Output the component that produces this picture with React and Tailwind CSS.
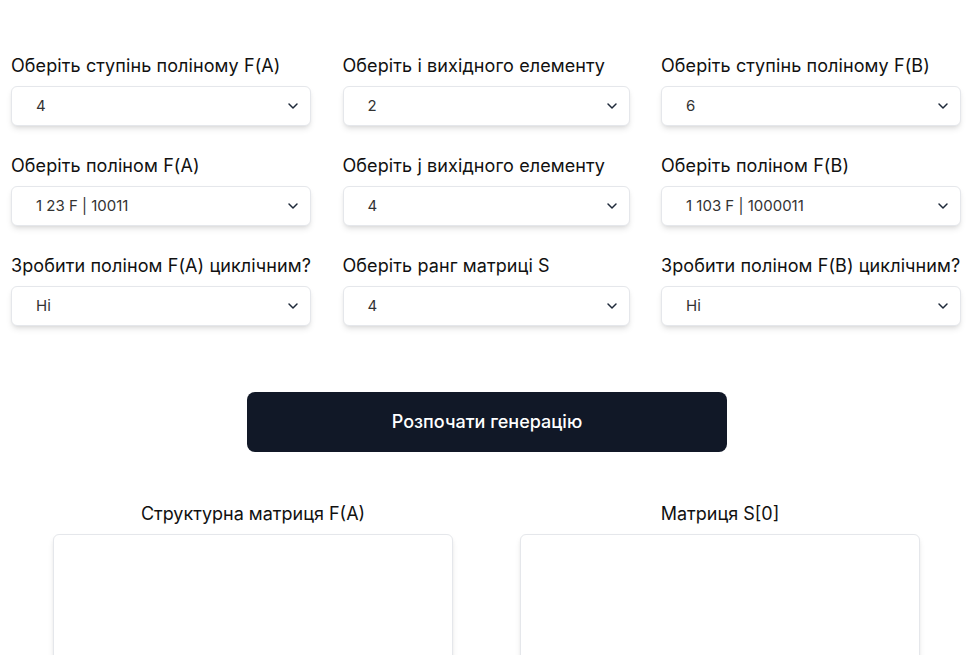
import React from "react";
import { ChevronDown } from "lucide-react";

const fields = [
  { label: "Оберіть ступінь поліному F(A)", value: "4" },
  { label: "Оберіть і вихідного елементу", value: "2" },
  { label: "Оберіть ступінь поліному F(B)", value: "6" },
  { label: "Оберіть поліном F(A)", value: "1 23 F | 10011" },
  { label: "Оберіть j вихідного елементу", value: "4" },
  { label: "Оберіть поліном F(B)", value: "1 103 F | 1000011" },
  { label: "Зробити поліном F(A) циклічним?", value: "Ні" },
  { label: "Оберіть ранг матриці S", value: "4" },
  { label: "Зробити поліном F(B) циклічним?", value: "Ні" },
];

const Select = ({ label, value }) => (
  <div className="flex flex-col">
    <p className="text-lg leading-7 text-[#111] whitespace-nowrap tracking-[0.1px]">{label}</p>
    <div className="mt-[6px] h-10 flex items-center justify-between pl-6 pr-[9px] bg-white border border-gray-200 rounded-md shadow-md">
      <span className="text-[15px] text-[#333]">{value}</span>
      <ChevronDown className="w-4 h-4 text-gray-800" strokeWidth={2.2} />
    </div>
  </div>
);

const App = () => {
  return (
    <div
      className="w-[970px] h-[655px] overflow-hidden bg-white"
      style={{ fontFamily: "Inter, 'Noto Sans', sans-serif" }}
    >
      <div className="pt-[52px] pl-[11px]">
        <div className="grid grid-cols-[300px_287px_300px] gap-x-[31.5px] gap-y-[26px]">
          {fields.map((f, i) => (
            <Select key={i} {...f} />
          ))}
        </div>
      </div>

      <div className="flex justify-center mt-[66px] pl-[4px]">
        <button className="w-[480px] h-[60px] rounded-lg bg-[#111827] text-white text-lg font-medium">
          Розпочати генерацію
        </button>
      </div>

      <div className="flex justify-center gap-[67px] mt-12 pl-[3px]">
        <div className="flex flex-col items-center">
          <p className="text-lg leading-7 text-[#111]">Структурна матриця F(A)</p>
          <div className="mt-[6px] w-[400px] h-[200px] bg-white border border-gray-200 rounded-md shadow-md"></div>
        </div>
        <div className="flex flex-col items-center">
          <p className="text-lg leading-7 text-[#111]">Матриця S[0]</p>
          <div className="mt-[6px] w-[400px] h-[200px] bg-white border border-gray-200 rounded-md shadow-md"></div>
        </div>
      </div>
    </div>
  );
};

export default App;
